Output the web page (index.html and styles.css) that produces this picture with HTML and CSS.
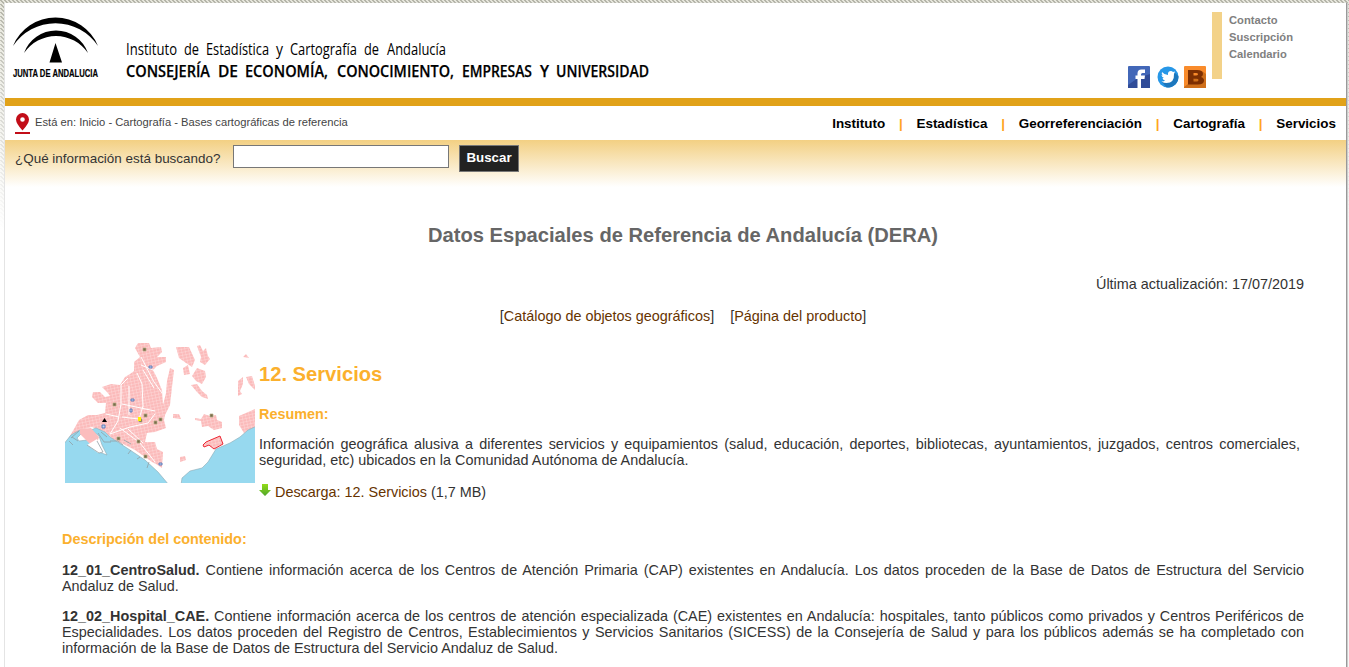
FILE: index.html
```html
<!DOCTYPE html>
<html lang="es">
<head>
<meta charset="utf-8">
<title>Datos Espaciales de Referencia de Andalucía (DERA)</title>
<link rel="stylesheet" href="styles.css">
</head>
<body>
<div class="page">
  <header class="header">
    <svg class="logo" width="90" height="66" viewBox="11 14 90 66" role="img" aria-label="Junta de Andalucía">
      <path d="M13 46A46 46 0 0 1 98 46A51 51 0 0 0 13 46ZM24 53A34 34 0 0 1 88 53A38.600 38.600 0 0 0 24 53ZM55.500 43L49.500 62.500H62Z"/>
      <text class="logo-text" x="13" y="77" textLength="85" lengthAdjust="spacingAndGlyphs">JUNTA DE ANDALUCIA</text>
    </svg>
    <svg class="brand" width="530" height="52" viewBox="0 0 530 52">
      <g class="brand-light">
        <text x="0" y="23" textLength="51" lengthAdjust="spacingAndGlyphs">Instituto</text>
        <text x="58" y="23" textLength="15" lengthAdjust="spacingAndGlyphs">de</text>
        <text x="80" y="23" textLength="63" lengthAdjust="spacingAndGlyphs">Estadística</text>
        <text x="150" y="23" textLength="7" lengthAdjust="spacingAndGlyphs">y</text>
        <text x="164" y="23" textLength="67" lengthAdjust="spacingAndGlyphs">Cartografía</text>
        <text x="238" y="23" textLength="15" lengthAdjust="spacingAndGlyphs">de</text>
        <text x="261" y="23" textLength="59" lengthAdjust="spacingAndGlyphs">Andalucía</text>
      </g>
      <g class="brand-bold">
        <text x="0" y="45" textLength="84" lengthAdjust="spacingAndGlyphs">CONSEJERÍA</text>
        <text x="92" y="45" textLength="20" lengthAdjust="spacingAndGlyphs">DE</text>
        <text x="119" y="45" textLength="83" lengthAdjust="spacingAndGlyphs">ECONOMÍA,</text>
        <text x="211" y="45" textLength="117" lengthAdjust="spacingAndGlyphs">CONOCIMIENTO,</text>
        <text x="336" y="45" textLength="70" lengthAdjust="spacingAndGlyphs">EMPRESAS</text>
        <text x="414" y="45" textLength="9" lengthAdjust="spacingAndGlyphs">Y</text>
        <text x="430" y="45" textLength="93" lengthAdjust="spacingAndGlyphs">UNIVERSIDAD</text>
      </g>
    </svg>
    <div class="social">
      <svg width="22" height="22" viewBox="0 0 22 22">
        <rect width="22" height="22" rx="1" fill="#4267b8"/><path d="M10 12L0 19V22H22V8Z" fill="#304c98"/>
        <path d="M9.500 22V13H7.500V9.500H9.500V7.500Q9.500 3.500 13.500 3.500H17V7H14.500Q13 7 13 8.500V9.500H17L16.500 13H13V22Z" fill="#fff"/>
      </svg>
      <svg class="twitter" width="22" height="22" viewBox="0 0 22 22">
        <circle cx="11" cy="11" r="10.500" fill="#2797e7"/><path d="M5 16L9.500 21.400A10.500 10.500 0 0 0 21.400 10L17 6Z" fill="#1c77bd"/>
        <path d="M5 6Q7.500 9 11 9Q10.500 5 14 5Q15 5 16 6L18 5.500L17 8Q17.500 17 9.500 17Q7 17 4.500 15.500Q7 15.500 8 14.500Q6 14 5.500 12H7Q4.500 11 4.500 9L6 9.500Q4 8 5 6Z" fill="#fff"/>
      </svg>
      <svg width="22" height="22" viewBox="0 0 22 22">
        <rect width="22" height="22" rx="1" fill="#f98b2b"/><path d="M4 18L0 21V22H22V8L18 5Z" fill="#cf6f1a"/>
        <path fill-rule="evenodd" d="M4 4H13Q19 4 19 8Q19 10 17 11Q20 12 20 14.500Q20 18.500 14 18.500H4ZM9.500 7V9.500H12Q14 9.500 14 8.200Q14 7 12 7ZM9.500 12.700V15.500H12.500Q14.500 15.500 14.500 14Q14.500 12.700 12.500 12.700Z" fill="#7d2f02"/>
      </svg>
    </div>
    <ul class="links"><li>Contacto</li><li>Suscripción</li><li>Calendario</li></ul>
  </header>

  <div class="navbar">
    <svg class="pin" width="15" height="22" viewBox="0 0 15 22">
      <path fill-rule="evenodd" d="M7.500 0A6.500 6.500 0 0 0 1 6.500Q1 10.500 7.500 17.500Q14 10.500 14 6.500A6.500 6.500 0 0 0 7.500 0ZM7.500 4.200A2.300 2.300 0 1 1 7.500 8.800A2.300 2.300 0 1 1 7.500 4.200ZM0 19H15V21H0Z" fill="#c20d18"/>
    </svg>
    <span class="crumbs">Está en: Inicio - Cartografía - Bases cartográficas de referencia</span>
    <nav class="menu">
      <a>Instituto</a><i>|</i><a>Estadística</a><i>|</i><a>Georreferenciación</a><i>|</i><a>Cartografía</a><i>|</i><a>Servicios</a>
    </nav>
  </div>

  <form class="search">
    <label class="search-label" for="q">¿Qué información está buscando?</label>
    <input class="search-input" id="q" type="text">
    <button class="search-button" type="button">Buscar</button>
  </form>

  <main class="content">
    <h1 class="title">Datos Espaciales de Referencia de Andalucía (DERA)</h1>
    <p class="updated">Última actualización: 17/07/2019</p>
    <p class="product-links"><span>[<a>Catálogo de objetos geográficos</a>]</span><span>[<a>Página del producto</a>]</span></p>

    <section class="service">
      <svg class="map" width="190" height="140" viewBox="0 0 190 140">
        <defs>
          <pattern id="blocks" width="3.500" height="3" patternUnits="userSpaceOnUse" patternTransform="rotate(-12)">
            <rect width="3.500" height="3" fill="#fbbaba"/><path d="M0 0H3.500M0 0V3" stroke="#fde0e0" stroke-width=".8"/>
          </pattern>
        </defs>
        <g fill="url(#blocks)">
          <path d="M70 5L73 0H84L86 5L96 4L97 9L92 14L101 14V19L92 23L88 27L92 35L97 47L98 62L101 50L102 38L105 25L109 27L107 44L105 62L100 72L99 77L101 85L90 89L82 90L80 99H90L92 106L98 109L97 125L91 121L87 119L70 107L48 96L40 89L27 84L15 87L8 94L3 96L9 86L14 77L23 72L32 72L40 70L41 60L33 60L27 54L28 49L35 49L40 54L45 53L42 49L37 44L46 41L55 42L60 34L65 31L69 28V19L75 14Z"/>
          <path d="M111 4L124 4L130 17L127 24L121 20L114 15ZM132 3L135 2L138 8L141 5L143 13L145 16L140 22L135 19L136 14ZM118 25L123 22L125 31L119 32ZM132 25L140 28L141 34L137 41L131 38L127 33ZM126 42L132 41L137 48L142 52L143 56L137 54L132 49ZM130 75L136 76L139 71L145 73L151 72L152 77L157 79L157 85L149 87L143 83L137 84L136 78L130 77ZM173 38L178 34V41L175 48L177 51L173 53ZM181 34L187 33L190 43V47L184 41ZM178 14L181 11L184 15ZM174 73L190 66V84L179 90L174 82ZM108 71H114L116 76L108 75ZM115 114L120 113L121 117L115 119Z"/>
        </g>
        <g fill="none" stroke="#fff" stroke-width="1">
          <path d="M63 35L56 42L56 61L53 78L45 91M45 91L65 84L83 80L90 71M72 30L77 41L78 63L74 76L57 74M76 14L89 39L97 50M76 22L93 29M57 61L90 68M64 43L64 72M78 27L89 45M55 85L75 100L90 119M41 71L54 74M63 86L78 100"/>
        </g>
        <g fill="#97d9ef" stroke="#8ca9b4" stroke-width=".6">
          <path d="M-2 102L6 92L15 87L17 90L12 95L14 98L22 97L34 109L42 112L37 102L34 93L26 87L31 85L40 89L45 94L65 107L80 117L93 129L104 142H-2Z"/>
          <path d="M116 142L117 135L125 128L137 125L143 119L151 106L165 100L175 94L183 87L192 83V142Z"/>
        </g>
        <path d="M15 86L26 85L34 94L32 100L27 103L15 91Z" fill="#fbbdbd"/>
        <path d="M22 102L32 96L38 110L33 110Z" fill="#fff"/>
        <g fill="none" stroke="#91a0a5" stroke-width=".8"><path d="M4 98L8 102M7 94L13 98M14 88L6 95M33 90L39 99L46 99M36 89L42 94M45 98H53L58 102M59 97L66 101M66 107L63 111M75 114L72 116M84 119L82 125M22 102L34 110L38 109L32 98"/></g>
        <path d="M141 99L155 93L158 101L149 106L144 102L139 104L138 102Z" fill="url(#blocks)" stroke="#ed2734"/>
        <g fill="#786b4b" stroke="#b1ad84" stroke-width=".7"><path d="M78 5h3v3h-3zM48 60h3v3h-3zM79 71h3v3h-3zM89 78h3v3h-3zM94 75h3v3h-3zM74 76h3v3h-3zM52 94h3v3h-3zM72 97h3v3h-3zM79 112h3v3h-3zM145 71h3v3h-3z"/></g>
        <g fill="#bed4ef" stroke="#5877b8" stroke-width=".9"><path d="M84 23h3v2h-3zM66 56h3v2h-3zM65 66h2v3h-2zM37 82h3v3h-3zM94 120h3v2h-3z"/></g>
        <rect x="73" y="74" width="3" height="4" fill="#fff200"/><path d="M39.500 75L42 79H37Z"/>
      </svg>
      <div class="service-text">
        <h2 class="service-title">12. Servicios</h2>
        <h3 class="subhead">Resumen:</h3>
        <p class="summary">Información geográfica alusiva a diferentes servicios y equipamientos (salud, educación, deportes, bibliotecas, ayuntamientos, juzgados, centros comerciales, seguridad, etc) ubicados en la Comunidad Autónoma de Andalucía.</p>
        <p class="download">
          <svg class="arrow" width="12" height="13" viewBox="0 0 12 13"><defs><linearGradient id="green" x2="0" y2="1"><stop stop-color="#92dc18"/><stop offset="1" stop-color="#50a52b"/></linearGradient></defs><path d="M3 0H9V6H12L6 12L0 6H3Z" fill="url(#green)"/></svg>
          <span><a>Descarga: 12. Servicios</a> (1,7 MB)</span>
        </p>
      </div>
    </section>

    <section class="description">
      <h3 class="subhead">Descripción del contenido:</h3>
      <p><strong>12_01_CentroSalud.</strong> Contiene información acerca de los Centros de Atención Primaria (CAP) existentes en Andalucía. Los datos proceden de la Base de Datos de Estructura del Servicio Andaluz de Salud.</p>
      <p><strong>12_02_Hospital_CAE.</strong> Contiene información acerca de los centros de atención especializada (CAE) existentes en Andalucía: hospitales, tanto públicos como privados y Centros Periféricos de Especialidades. Los datos proceden del Registro de Centros, Establecimientos y Servicios Sanitarios (SICESS) de la Consejería de Salud y para los públicos además se ha completado con información de la Base de Datos de Estructura del Servicio Andaluz de Salud.</p>
    </section>
  </main>
</div>
</body>
</html>
```
FILE: styles.css
```css
* { box-sizing: border-box; }
body {
  margin: 0;
  padding: 3px 3px 0 5px;
  height: 667px;
  overflow: hidden;
  font: 14.4px/16px "Liberation Sans", Arial, sans-serif;
  text-rendering: optimizeSpeed;
  color: #333;
  background:
    linear-gradient(to bottom, rgba(255,255,255,0), #fff 230px),
    linear-gradient(45deg, #e6e6dc 37.5%, #b4b4a8 37.5% 62.5%, #e6e6dc 62.5%) 0 0 / 4px 4px;
}
h1, h2, h3, p, ul { margin: 0; padding: 0; }
a { color: #663300; }
.page { height: 664px; background: #fff; box-shadow: 1px 0 0 #999, 2px 0 1px #ccc, -1px 0 0 #e4e4e4; }
.header { display: flex; height: 103px; padding-left: 6px; border-bottom: 8px solid #e1a219; }
.logo { margin-top: 11px; flex: none; }
.logo-text { font: bold 11px "Liberation Sans", sans-serif; stroke: #000; stroke-width: .2px; }
.brand { margin: 29px 0 0 25px; flex: none; }
.brand-light { font: 17px "Open Sans", sans-serif; }
.brand-bold { font: 600 17px "Open Sans", sans-serif; stroke: #000; stroke-width: .25px; }
.social { display: flex; gap: 5px; margin: 63px 6px 0 auto; height: 22px; }
.twitter { margin: 0 0 0 2px; }
.links { width: 134px; height: 67px; margin-top: 9px; padding-left: 7px; border-left: 10px solid #f3d289; list-style: none; font-size: 11.2px; font-weight: bold; line-height: 17px; color: #808080; }
.navbar { display: flex; align-items: flex-start; height: 34px; padding: 7px 10px 0; }
.pin { flex: none; }
.crumbs { margin: 1px 0 0 5px; font-size: 11.2px; color: #444; }
.menu { display: flex; margin: 3px 0 0 auto; font-size: 13.44px; font-weight: bold; }
.menu a { color: #000; }
.menu i { width: 31.3px; text-align: center; font-style: normal; color: #ffa520; }
.search { display: flex; align-items: flex-start; height: 60px; padding: 5px 10px; background: linear-gradient(#f3d083, #fff 47px); }
.search-label { width: 218px; padding-top: 6px; font-size: 13.44px; }
.search-input { width: 216px; height: 23px; padding: 0; border: 1px solid #777; background: #fff; }
.search-button { width: 60px; height: 27px; margin-left: 10px; padding: 0 0 2px; border: 1px solid #777; background: #222; color: #fff; font: bold 13.33px "Liberation Sans", sans-serif; }
.content { padding: 23px 42px 0 57px; }
.title { height: 24px; font-size: 20.16px; line-height: 24px; text-align: center; color: #666; }
.updated { margin-top: 29px; text-align: right; }
.product-links { display: flex; justify-content: center; gap: 16px; margin-top: 16px; }
.service { display: flex; gap: 4px; margin-top: 19px; padding: 0 4px 0 3px; height: 180px; }
.map { flex: none; }
.service-text { padding-top: 19px; flex: 1; }
.service-title { font-size: 20.16px; line-height: 24px; color: #fbb02d; }
.subhead { font-size: 14.4px; line-height: 16px; color: #fbb02d; }
.service-text .subhead { margin-top: 20px; }
.summary { margin-top: 14px; text-align: justify; }
.download { display: flex; gap: 4px; margin-top: 16px; }
.description { padding-top: 8px; text-align: justify; }
.description p { margin-top: 14px; }
.description .subhead + p { margin-top: 15px; }
```
